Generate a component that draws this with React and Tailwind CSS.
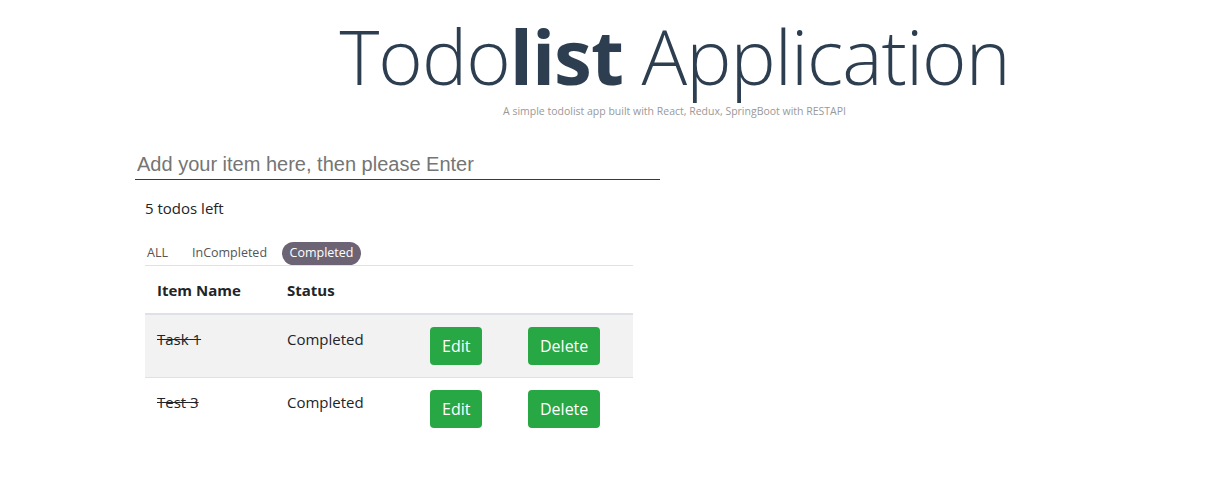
import React, { useState } from 'react';

const todos = [
  { id: 1, name: 'Task 1', status: 'Completed' },
  { id: 3, name: 'Test 3', status: 'Completed' },
];

const tabs = [
  { label: 'ALL', gap: 'mr-[14px]' },
  { label: 'InCompleted', gap: 'mr-[7px]' },
  { label: 'Completed', gap: '' },
];

const App = () => {
  const [filter, setFilter] = useState('Completed');
  const [text, setText] = useState('');

  return (
    <div className="min-h-screen bg-white text-[#212529]" style={{ fontFamily: '"Open Sans", "Noto Sans", sans-serif' }}>
      {/* header */}
      <div className="pl-[142px] text-center text-[#2c3e50] pt-[8px]">
        <h1 className="text-[76px] leading-[96px] font-light tracking-[-1px]">
          Todo<span className="font-bold">list</span> Application
        </h1>
        <p className="text-[10.5px] leading-[14px] text-[#999] mt-0">
          A simple todolist app built with React, Redux, SpringBoot with RESTAPI
        </p>
      </div>

      <div className="ml-[135px] w-[525px] mt-[28px]">
        <input
          type="text"
          value={text}
          onChange={(e) => setText(e.target.value)}
          placeholder="Add your item here, then please Enter"
          className="w-full h-[34px] px-[2px] pt-[4px] border-b border-[#343a40] text-[20px] placeholder-[#757575] outline-none"
          style={{ fontFamily: '"Liberation Sans", Arial, sans-serif' }}
        />

        <div className="ml-[10px] mt-[18px] text-[15px] leading-[20px]">5 todos left</div>

        <div className="ml-[10px] mt-[24px] w-[488px]">
          <div className="flex items-center gap-[6px] border-b border-[#dee2e6]">
            {tabs.map((t) => (
              <button
                key={t.label}
                onClick={() => setFilter(t.label)}
                className={
                  t.label === filter
                    ? 'px-[7.5px] h-[23px] rounded-full bg-[#6c6375] text-white text-[12.5px] ' + t.gap
                    : 'px-[2px] h-[23px] text-[#555] text-[12.5px] ' + t.gap
                }
              >
                {t.label}
              </button>
            ))}
          </div>

          <table className="w-full text-[15px] border-collapse">
            <thead>
              <tr className="border-b-2 border-[#dee2e6] text-left">
                <th className="w-[130px] px-[12px] pt-[12px] pb-[11px] leading-[24px] font-bold">Item Name</th>
                <th className="w-[143px] px-[12px] pt-[12px] pb-[11px] leading-[24px] font-bold">Status</th>
                <th className="w-[98px] px-[12px] pt-[12px] pb-[11px]"></th>
                <th className="px-[12px] pt-[12px] pb-[11px]"></th>
              </tr>
            </thead>
            <tbody>
              {todos.map((todo, i) => (
                <tr
                  key={todo.id}
                  className={
                    (i < todos.length - 1 ? 'border-b border-[#dee2e6] ' : '') +
                    (i % 2 === 0 ? 'bg-[#f2f2f2]' : 'bg-white')
                  }
                >
                  <td className="px-[12px] py-[12px] align-top leading-[24px] line-through">{todo.name}</td>
                  <td className="px-[12px] py-[12px] align-top leading-[24px]">{todo.status}</td>
                  <td className="px-[12px] py-[12px] align-top">
                    <button className="h-[38px] px-[12px] rounded-[4px] bg-[#28a745] text-white text-[16px]">Edit</button>
                  </td>
                  <td className="px-[12px] py-[12px] align-top">
                    <button className="h-[38px] px-[12px] rounded-[4px] bg-[#28a745] text-white text-[16px]">Delete</button>
                  </td>
                </tr>
              ))}
            </tbody>
          </table>
        </div>
      </div>
    </div>
  );
};

export default App;
